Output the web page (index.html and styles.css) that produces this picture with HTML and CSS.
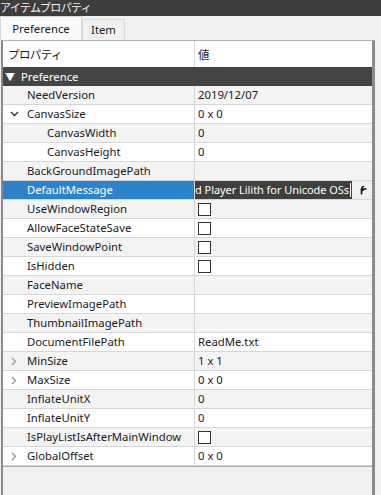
FILE: index.html
```html
<!DOCTYPE html>
<html>
<head>
	<title>アイテムプロパティ</title>
	<meta charset="utf-8">
	<link rel="stylesheet" href="styles.css">
</head>
<body>
	<div class="win">
		<div class="win__title">アイテムプロパティ</div>
		<div class="tabs">
			<div class="tabs__tab tabs__tab_active">Preference</div>
			<div class="tabs__tab tabs__tab_item">Item</div>
		</div>
		<div class="grid">
			<div class="grid__head">
				<div class="grid__hname">プロパティ</div>
				<div class="grid__hval">値</div>
			</div>
			<div class="grid__cat"><span class="grid__tri">&#9660;</span>Preference</div>

			<div class="row row_alt"><div class="row__name">NeedVersion</div><div class="row__val">2019/12/07</div></div>
			<div class="row"><div class="row__name"><span class="row__exp row__exp_open"><svg width="9" height="6" viewBox="0 0 9 6"><path d="M1 1l3.5 3.5L8 1" fill="none" stroke="#333" stroke-width="1.4"/></svg></span>CanvasSize</div><div class="row__val">0 x 0</div></div>
			<div class="row row_alt"><div class="row__name row__name_sub">CanvasWidth</div><div class="row__val">0</div></div>
			<div class="row"><div class="row__name row__name_sub">CanvasHeight</div><div class="row__val">0</div></div>
			<div class="row row_alt"><div class="row__name">BackGroundImagePath</div><div class="row__val"></div></div>
			<div class="row row_sel">
				<div class="row__name">DefaultMessage</div>
				<div class="row__val row__val_edit">
					<div class="edit"><span class="edit__text">d Player Lilith for Unicode OSs</span><span class="edit__caret"></span></div>
					<div class="edit__btn"><svg width="9" height="9" viewBox="0 0 9 9"><path d="M2.5 8.5V3h5M2.5 2l2.5-2M2.5 2l2 2.5" fill="none" stroke="#111" stroke-width="1.6"/></svg></div>
				</div>
			</div>
			<div class="row row_alt"><div class="row__name">UseWindowRegion</div><div class="row__val"><span class="check"></span></div></div>
			<div class="row"><div class="row__name">AllowFaceStateSave</div><div class="row__val"><span class="check"></span></div></div>
			<div class="row row_alt"><div class="row__name">SaveWindowPoint</div><div class="row__val"><span class="check"></span></div></div>
			<div class="row"><div class="row__name">IsHidden</div><div class="row__val"><span class="check"></span></div></div>
			<div class="row row_alt"><div class="row__name">FaceName</div><div class="row__val"></div></div>
			<div class="row"><div class="row__name">PreviewImagePath</div><div class="row__val"></div></div>
			<div class="row row_alt"><div class="row__name">ThumbnailImagePath</div><div class="row__val"></div></div>
			<div class="row"><div class="row__name">DocumentFilePath</div><div class="row__val">ReadMe.txt</div></div>
			<div class="row row_alt"><div class="row__name"><span class="row__exp"><svg width="6" height="9" viewBox="0 0 6 9"><path d="M1 1l3.5 3.5L1 8" fill="none" stroke="#999" stroke-width="1.4"/></svg></span>MinSize</div><div class="row__val">1 x 1</div></div>
			<div class="row"><div class="row__name"><span class="row__exp"><svg width="6" height="9" viewBox="0 0 6 9"><path d="M1 1l3.5 3.5L1 8" fill="none" stroke="#999" stroke-width="1.4"/></svg></span>MaxSize</div><div class="row__val">0 x 0</div></div>
			<div class="row row_alt"><div class="row__name">InflateUnitX</div><div class="row__val">0</div></div>
			<div class="row"><div class="row__name">InflateUnitY</div><div class="row__val">0</div></div>
			<div class="row row_alt"><div class="row__name">IsPlayListIsAfterMainWindow</div><div class="row__val"><span class="check"></span></div></div>
			<div class="row"><div class="row__name"><span class="row__exp"><svg width="6" height="9" viewBox="0 0 6 9"><path d="M1 1l3.5 3.5L1 8" fill="none" stroke="#999" stroke-width="1.4"/></svg></span>GlobalOffset</div><div class="row__val">0 x 0</div></div>
			<div class="grid__rest"></div>
		</div>
	</div>
</body>
</html>
```

FILE: styles.css
```css
* {
	box-sizing: border-box;
}
body {
	margin: 0;
	background: #f0f0f0;
	font-family: "Noto Sans", "Noto Sans CJK JP", sans-serif;
	font-size: 11.3px;
	color: #1a1a1a;
}
.win {
	height: 495px;
	display: flex;
	flex-direction: column;
}
.win__title {
	height: 16px;
	line-height: 15px;
	background: #3d3d3d;
	color: #f4f4f4;
	padding-left: 0;
	font-family: "Noto Sans CJK JP", sans-serif;
	font-size: 11px;
	letter-spacing: -0.6px;
}
.tabs {
	height: 24px;
	display: flex;
	align-items: flex-end;
}
.tabs__tab {
	height: 21px;
	line-height: 20px;
	border: 1px solid #d9d9d9;
	border-bottom: none;
	background: #f0f0f0;
	text-align: center;
}
.tabs__tab_active {
	height: 24px;
	line-height: 24px;
	background: #fafafa;
	width: 82px;
}
.tabs__tab_item {
	width: 43px;
}
.grid {
	flex: 1;
	margin: 0 6px 0 1px;
	border-left: 2px solid #8a8a8a;
	border-right: 3px solid #8a8a8a;
	border-top: 1px solid #b4b4b4;
	display: flex;
	flex-direction: column;
}
.grid__head {
	height: 26px;
	display: grid;
	grid-template-columns: 192px 1fr;
	background: #fff;
	align-items: center;
}
.grid__hname {
	padding-left: 5px;
	height: 100%;
	display: flex;
	align-items: center;
	border-right: 1px solid #dcdcdc;
	font-family: "Noto Sans CJK JP", sans-serif;
	font-size: 11.5px;
	letter-spacing: -0.6px;
}
.grid__hval {
	padding-left: 3px;
	font-family: "Noto Sans CJK JP", sans-serif;
	font-size: 11.5px;
}
.grid__cat {
	height: 19px;
	line-height: 19px;
	background: #444;
	color: #fff;
	padding-left: 2px;
}
.grid__tri {
	font-size: 10px;
	display: inline-block;
	width: 16px;
}
.row {
	height: 19px;
	display: grid;
	grid-template-columns: 192px 1fr;
	border-bottom: 1px solid #d6d6d6;
	background: #fff;
	line-height: 18px;
}
.row_alt {
	background: #f3f3f3;
}
.row__name {
	padding-left: 24px;
	border-right: 1px solid #d6d6d6;
	white-space: nowrap;
	overflow: hidden;
	position: relative;
}
.row__name_sub {
	padding-left: 44px;
}
.row__exp {
	position: absolute;
	left: 6px;
	top: 0;
	height: 18px;
	width: 10px;
	display: flex;
	align-items: center;
	justify-content: center;
}
.row__val {
	padding-left: 3px;
	white-space: nowrap;
	overflow: hidden;
	display: flex;
	align-items: center;
}
.row_sel {
	background: #f0f0f0;
}
.row_sel .row__name {
	background: #2b83cc;
	color: #fff;
}
.row__val_edit {
	padding-left: 0;
	align-items: stretch;
}
.edit {
	flex: 1;
	min-width: 0;
	background: #3f3f3f;
	color: #fff;
	display: flex;
	align-items: center;
	white-space: nowrap;
	font-size: 11px;
	letter-spacing: -0.05px;
}
.edit__caret {
	flex: 0 0 1px;
	height: 14px;
	background: #fff;
	margin-left: 1px;
}
.edit__btn {
	flex: 0 0 18px;
	display: flex;
	align-items: center;
	justify-content: center;
	margin-left: 2px;
	background: #f0f0f0;
}
.check {
	width: 13px;
	height: 13px;
	border: 1px solid #333;
	background: #fff;
}
.grid__rest {
	flex: 1;
	border-top: 1px solid #a8a8a8;
	background: #f0f0f0;
}
```
